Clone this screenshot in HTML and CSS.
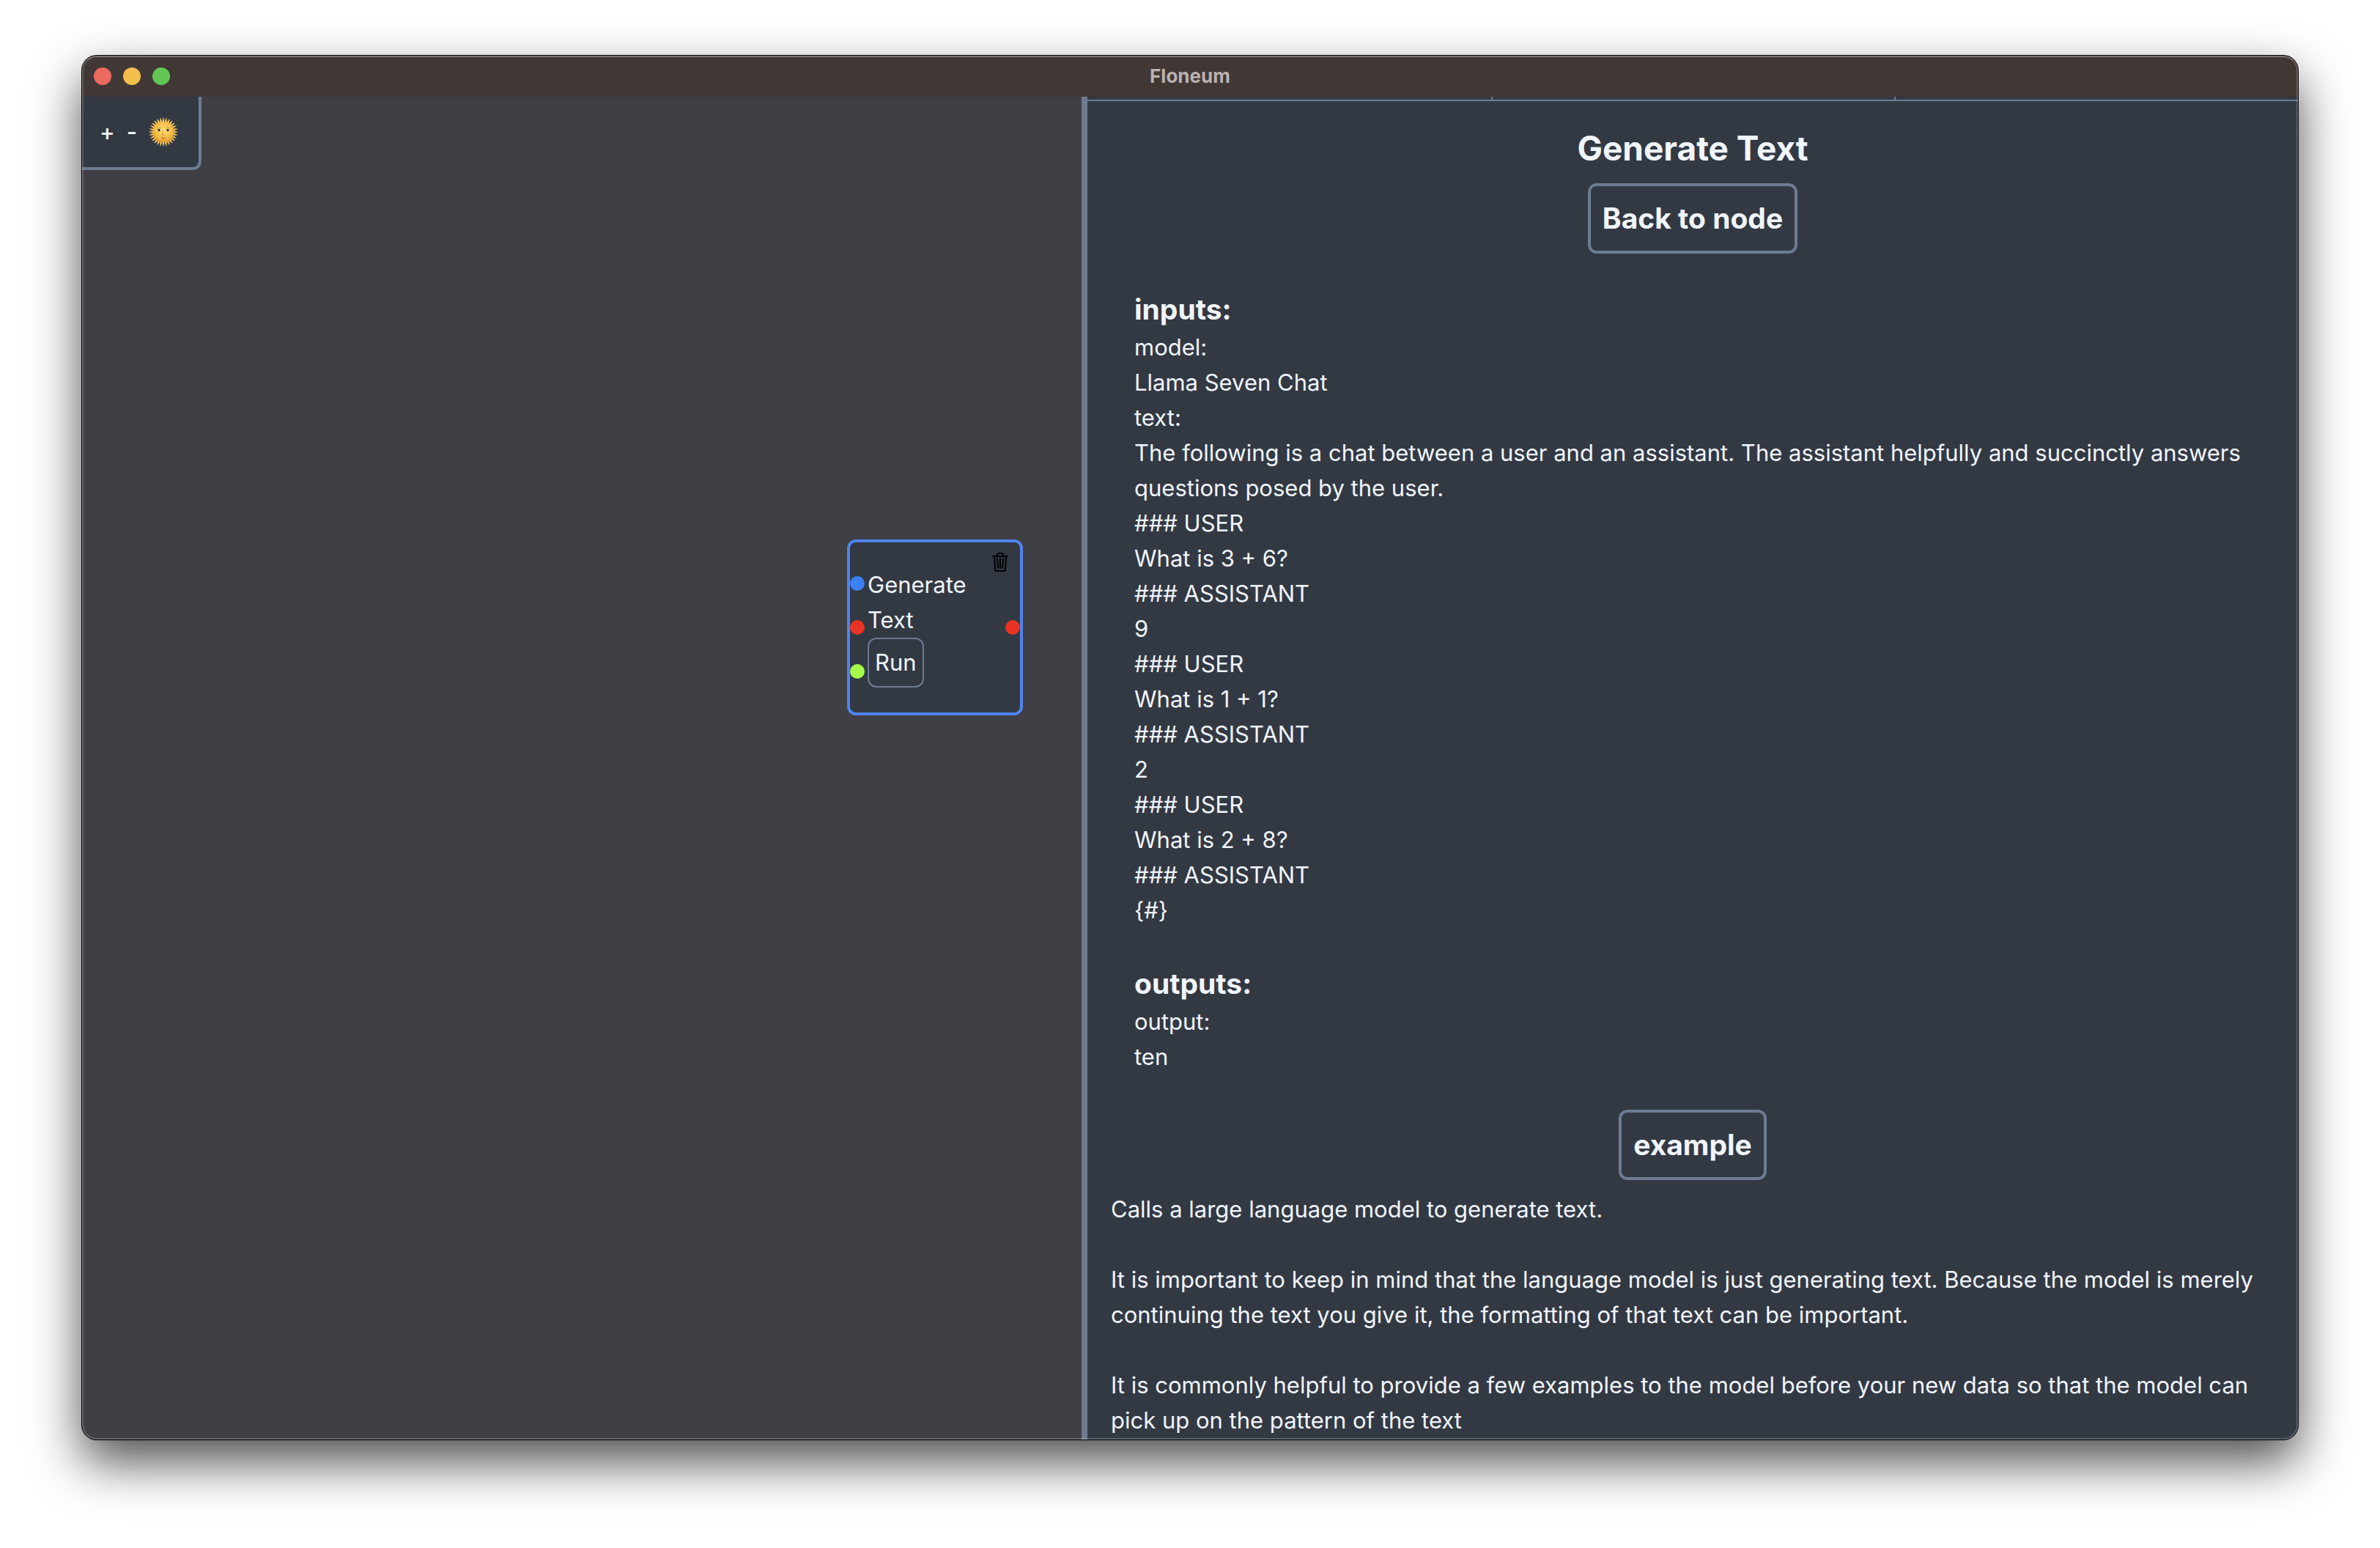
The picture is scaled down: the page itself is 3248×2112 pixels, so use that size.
FILE: index.html
```html
<!DOCTYPE html>
<html lang="en">
<head>
<meta charset="utf-8">
<meta name="viewport" content="width=device-width, initial-scale=1">
<title>Floneum</title>
<link rel="stylesheet" href="styles.css">
</head>
<body>
<div class="window">
  <header class="titlebar">
    <div class="lights">
      <button class="light light-close" aria-label="Close"></button>
      <button class="light light-minimize" aria-label="Minimize"></button>
      <button class="light light-zoom" aria-label="Zoom"></button>
    </div>
    <span class="title">Floneum</span>
  </header>
  <main class="workspace">
    <section class="canvas">
      <div class="toolbar">
        <button class="tool">+</button>
        <button class="tool">-</button>
        <button class="tool" aria-label="Toggle theme">
          <svg class="sun" viewBox="-20 -20 40 40" aria-hidden="true">
            <defs>
              <radialGradient id="sun-face" cx="50%" cy="40%" r="60%">
                <stop offset="0" stop-color="#fbdc72"/>
                <stop offset="0.6" stop-color="#f7c04d"/>
                <stop offset="1" stop-color="#e59a2c"/>
              </radialGradient>
            </defs>
            <g fill="none" stroke="#f5c65a">
              <circle r="15" stroke-width="3" pathLength="56" stroke-dasharray="1.4 0.6" stroke-dashoffset="0.7"/>
              <circle r="17" stroke-width="2" pathLength="56" stroke-dasharray="0.9 1.1" stroke-dashoffset="0.45"/>
              <circle r="18.700" stroke-width="1.600" pathLength="56" stroke-dasharray="0.5 1.5" stroke-dashoffset="0.25"/>
            </g>
            <circle r="14.500" fill="url(#sun-face)"/>
            <path d="M-9-5Q-6-7-3-5M3-5Q6-7 9-5" fill="none" stroke="#d99a36" stroke-width="1"/>
            <ellipse cx="-6" cy="-2.500" rx="2.600" ry="1.700" fill="#fff3d0"/>
            <ellipse cx="6" cy="-2.500" rx="2.600" ry="1.700" fill="#fff3d0"/>
            <circle cx="-6" cy="-2.500" r="1.700" fill="#39220f"/>
            <circle cx="6" cy="-2.500" r="1.700" fill="#39220f"/>
            <path d="M-1-2Q-1 2-2 4Q0 5.500 2 4" fill="none" stroke="#d99a36" stroke-width="1"/>
            <path d="M-4 8Q0 6.500 4 8Q0 11-4 8Z" fill="#d0842f"/>
          </svg>
        </button>
      </div>
      <article class="node">
        <span class="port port-model"></span>
        <span class="port port-text"></span>
        <span class="port port-limit"></span>
        <span class="port port-output"></span>
        <button class="delete" aria-label="Delete node">
          <svg class="trash" viewBox="0 0 24 28" fill="none" stroke="#000" stroke-width="2" stroke-linecap="round" stroke-linejoin="round" aria-hidden="true">
            <path d="M2 6H22M8 6V4Q8 2 10 2H14Q16 2 16 4V6M4 6L5 24Q5 26 7 26H17Q19 26 19 24L20 6"/>
            <path d="M8 9L9 22M12 9V22M16 9L15 22"/>
          </svg>
        </button>
        <p class="node-name">Generate Text</p>
        <button class="run">Run</button>
      </article>
    </section>
    <section class="panel">
      <div class="tabs"><span class="tab"></span><span class="tab"></span><span class="tab"></span></div>
      <div class="details">
        <h1 class="heading">Generate Text</h1>
        <button class="action">Back to node</button>
        <div class="example">
          <section>
            <h2 class="label">inputs:</h2>
            <p>model:</p>
            <p>Llama Seven Chat</p>
            <p>text:</p>
            <p class="prompt">The following is a chat between a user and an assistant. The assistant helpfully and succinctly answers questions posed by the user.
### USER
What is 3 + 6?
### ASSISTANT
9
### USER
What is 1 + 1?
### ASSISTANT
2
### USER
What is 2 + 8?
### ASSISTANT
{#}</p>
          </section>
          <section>
            <h2 class="label">outputs:</h2>
            <p>output:</p>
            <p>ten</p>
          </section>
        </div>
        <button class="action">example</button>
        <div class="description">
          <p>Calls a large language model to generate text.</p>
          <p>It is important to keep in mind that the language model is just generating text. Because the model is merely continuing the text you give it, the formatting of that text can be important.</p>
          <p>It is commonly helpful to provide a few examples to the model before your new data so that the model can pick up on the pattern of the text</p>
        </div>
      </div>
    </section>
  </main>
</div>
</body>
</html>
```
FILE: styles.css
```css
:root {
  --surface: #333943;
  --canvas: #403f45;
  --line: #6d7b92;
  --text: #f1f5ff;
}

* {
  box-sizing: border-box;
  margin: 0;
}

body {
  display: flex;
  min-height: 100vh;
  padding: 76px 112px 148px;
  background: #fff;
  color: var(--text);
  font: 400 31px/48px Inter, "Liberation Sans", sans-serif;
}

button {
  padding: 0;
  border: 0;
  background: none;
  color: inherit;
  font: inherit;
}

svg {
  display: block;
}

.window {
  position: relative;
  display: flex;
  flex: 1;
  flex-direction: column;
  min-width: 0;
  overflow: hidden;
  border-radius: 20px;
  background: var(--canvas);
  box-shadow: 0 0 0 1px #000, 0 30px 68px rgba(0, 0, 0, 0.7);
}

.window::after {
  content: "";
  position: absolute;
  inset: 0;
  border: 2px solid rgba(255, 255, 255, 0.2);
  border-top-color: rgba(255, 255, 255, 0.32);
  border-radius: 20px;
  pointer-events: none;
}

.titlebar {
  display: grid;
  grid-template-columns: 1fr auto 1fr;
  align-items: center;
  height: 56px;
  padding: 0 16px;
  background: #413735;
}

.lights {
  display: flex;
  gap: 16px;
}

.light {
  width: 24px;
  height: 24px;
  border-radius: 50%;
}

.light-close { background: #ed6a5f; }
.light-minimize { background: #f5bf4f; }
.light-zoom { background: #62c655; }

.title {
  color: #bbb2af;
  font-size: 26px;
  font-weight: 700;
}

.workspace {
  display: grid;
  flex: 1;
  grid-template-columns: 341fr 415fr;
}

.canvas {
  position: relative;
}

.toolbar {
  display: flex;
  gap: 16px;
  align-items: center;
  width: max-content;
  height: 100px;
  padding: 0 28px 0 24px;
  border: solid var(--line);
  border-width: 0 4px 4px 0;
  border-bottom-right-radius: 12px;
  background: var(--surface);
}

.tool {
  font-weight: 500;
}

.sun {
  width: 40px;
  height: 40px;
}

.node {
  position: absolute;
  top: 604px;
  left: 1044px;
  width: 240px;
  height: 240px;
  padding: 34px 24px;
  border: 4px solid #4f83ee;
  border-radius: 12px;
  background: var(--surface);
}

.port {
  position: absolute;
  left: 0;
  width: 20px;
  height: 20px;
  border-radius: 50%;
}

.port-model { top: 46px; background: #3c80f6; }
.port-text { top: 106px; background: #e93323; }
.port-limit { top: 166px; background: #a5fd4c; }
.port-output { top: 106px; right: 0; left: auto; background: #e93323; }

.delete {
  position: absolute;
  top: 13px;
  right: 15px;
}

.trash {
  width: 24px;
  height: 28px;
}

.run {
  padding: 8px;
  border: 2px solid var(--line);
  border-radius: 12px;
}

.panel {
  border-left: 8px solid var(--line);
  background: var(--surface);
}

.tabs {
  display: grid;
  grid-template-columns: repeat(3, 1fr);
  height: 6px;
  border-bottom: 2px solid var(--line);
}

.tab + .tab {
  border-left: 2px solid var(--line);
}

.details {
  display: flex;
  flex-direction: column;
  align-items: center;
  padding: 32px 32px 0;
}

.heading {
  margin-bottom: 16px;
  font-size: 46px;
  line-height: 64px;
}

.action {
  padding: 16px;
  border: 4px solid var(--line);
  border-radius: 12px;
  font-size: 39px;
  font-weight: 700;
  line-height: 56px;
}

.example {
  display: flex;
  flex-direction: column;
  gap: 48px;
  align-self: stretch;
  padding: 48px 32px;
}

.label {
  font-size: 39px;
  line-height: 56px;
}

.prompt {
  white-space: pre-wrap;
}

.description {
  display: flex;
  flex-direction: column;
  gap: 48px;
  align-self: stretch;
  padding-top: 16px;
}
```
